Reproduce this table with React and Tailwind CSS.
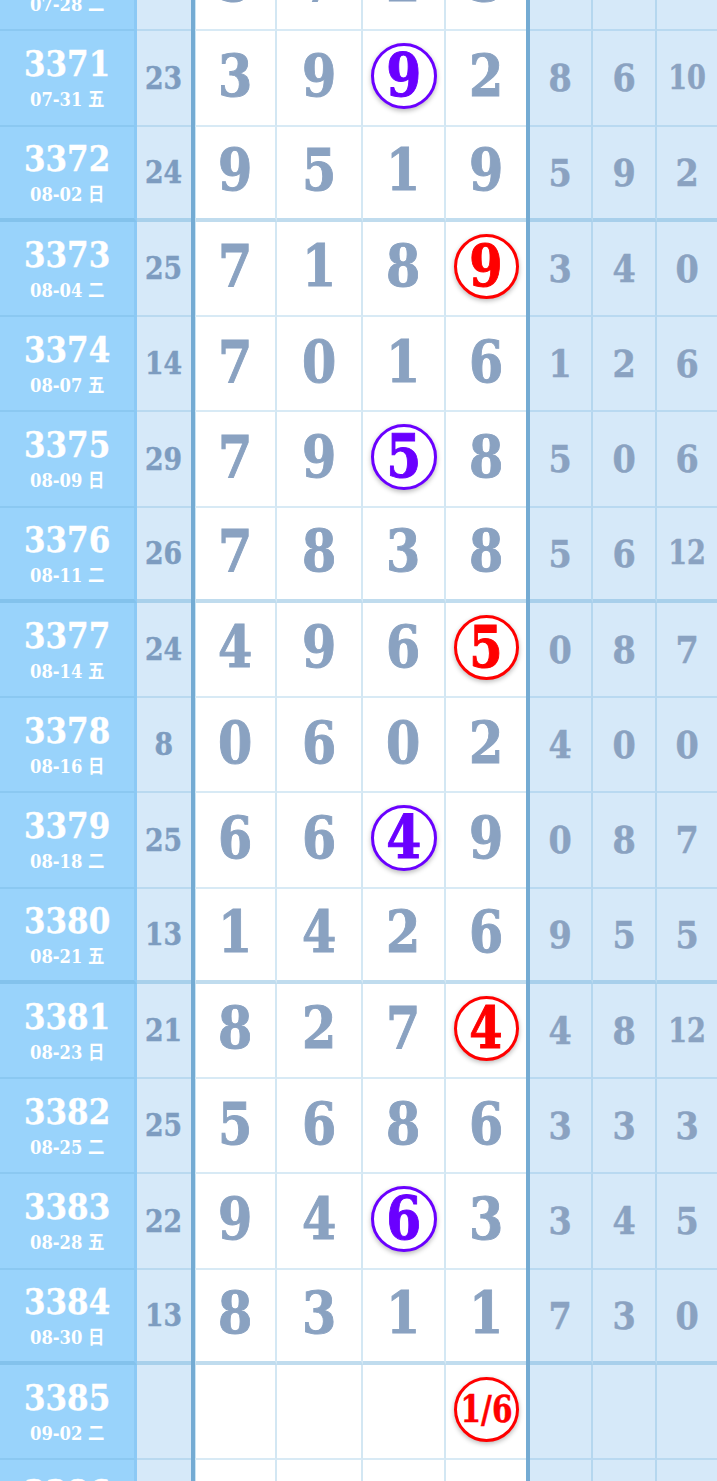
import React from "react";

const rows = [
  { id: "3370", date: "07-28 二", s: "", d: ["5", "7", "2", "3"], r: ["", "", ""] },
  { id: "3371", date: "07-31 五", s: "23", d: ["3", "9", "9", "2"], r: ["8", "6", "10"], c: 2, cc: "p" },
  { id: "3372", date: "08-02 日", s: "24", d: ["9", "5", "1", "9"], r: ["5", "9", "2"], thick: true },
  { id: "3373", date: "08-04 二", s: "25", d: ["7", "1", "8", "9"], r: ["3", "4", "0"], c: 3, cc: "r" },
  { id: "3374", date: "08-07 五", s: "14", d: ["7", "0", "1", "6"], r: ["1", "2", "6"] },
  { id: "3375", date: "08-09 日", s: "29", d: ["7", "9", "5", "8"], r: ["5", "0", "6"], c: 2, cc: "p" },
  { id: "3376", date: "08-11 二", s: "26", d: ["7", "8", "3", "8"], r: ["5", "6", "12"], thick: true },
  { id: "3377", date: "08-14 五", s: "24", d: ["4", "9", "6", "5"], r: ["0", "8", "7"], c: 3, cc: "r" },
  { id: "3378", date: "08-16 日", s: "8", d: ["0", "6", "0", "2"], r: ["4", "0", "0"] },
  { id: "3379", date: "08-18 二", s: "25", d: ["6", "6", "4", "9"], r: ["0", "8", "7"], c: 2, cc: "p" },
  { id: "3380", date: "08-21 五", s: "13", d: ["1", "4", "2", "6"], r: ["9", "5", "5"], thick: true },
  { id: "3381", date: "08-23 日", s: "21", d: ["8", "2", "7", "4"], r: ["4", "8", "12"], c: 3, cc: "r" },
  { id: "3382", date: "08-25 二", s: "25", d: ["5", "6", "8", "6"], r: ["3", "3", "3"] },
  { id: "3383", date: "08-28 五", s: "22", d: ["9", "4", "6", "3"], r: ["3", "4", "5"], c: 2, cc: "p" },
  { id: "3384", date: "08-30 日", s: "13", d: ["8", "3", "1", "1"], r: ["7", "3", "0"], thick: true },
  { id: "3385", date: "09-02 二", s: "", d: ["", "", "", "1/6"], r: ["", "", ""], c: 3, cc: "r" },
  { id: "3386", date: "09-04 日", s: "", d: ["", "", "", ""], r: ["", "", ""] },
];

const font = { fontFamily: '"DejaVu Serif", "Noto Sans CJK SC", serif' };

function Circle({ color, text }) {
  const small = text.length > 1;
  if (color === "p") {
    return (
      <div className="-mt-[4px] w-[66px] h-[66px] rounded-full border-[3px] border-[#6a00ff] bg-white flex items-center justify-center text-[#6a00ff] shadow-[0_2px_5px_rgba(0,0,0,0.28)]">
        <span className="inline-block scale-x-[0.84] text-[60px] leading-none font-bold -mt-[2px] [-webkit-text-stroke:1px_#6a00ff]">{text}</span>
      </div>
    );
  }
  return (
    <div className="-mt-[4px] w-[65px] h-[65px] rounded-full border-[3px] border-[#ff0000] bg-white flex items-center justify-center text-[#ff0000] shadow-[0_2px_5px_rgba(0,0,0,0.28)]">
      {small ? (
        <span className="inline-block scale-x-[0.8] whitespace-nowrap text-[37px] leading-none font-bold [-webkit-text-stroke:0.5px_#ff0000]">{text}</span>
      ) : (
        <span className="inline-block scale-x-[0.84] text-[57px] leading-none font-bold -mt-[2px] [-webkit-text-stroke:1px_#ff0000]">{text}</span>
      )}
    </div>
  );
}

function Row({ row }) {
  const b = row.thick
    ? "border-b-4 border-b-[rgba(100,170,215,0.4)]"
    : "border-b-2 border-b-[rgba(100,170,215,0.25)]";
  const widths = ["w-[82px]", "w-[86px]", "w-[83px]", "w-[80px]"];
  const rw = ["w-[63px]", "w-[64px]", "w-[60px]"];
  return (
    <div className="flex h-[95.25px]">
      <div className={`w-[137px] shrink-0 bg-[#99d3fb] border-r-[3px] border-r-[rgba(60,140,210,0.14)] ${b} pb-[4px] flex flex-col items-center justify-center text-white font-bold`}>
        <div className="inline-block scale-x-[0.86] whitespace-nowrap text-[36px] leading-[47px] [-webkit-text-stroke:0.4px_#ffffff]">{row.id}</div>
        <div className="inline-block scale-x-[0.86] whitespace-nowrap text-[19px] leading-[24px]">{row.date}</div>
      </div>
      <div className={`w-[54px] shrink-0 bg-[#d6e9f9] ${b} flex items-center justify-center text-[#7d9cc0] font-bold text-[31px]`}>
        <span className="inline-block scale-x-[0.86] [-webkit-text-stroke:0.5px_#7d9cc0]">{row.s}</span>
      </div>
      <div className="w-[4px] shrink-0 bg-[#74abd3]" />
      {row.d.map((v, i) => (
        <div
          key={i}
          className={`${widths[i]} shrink-0 bg-white ${b} ${i === 0 ? "border-l border-l-[#cbe5f4]" : ""} ${i < 3 ? "border-r-2 border-r-[rgba(100,170,215,0.28)]" : ""} flex items-center justify-center text-[#8aa2c1] font-bold text-[58px] leading-none`}
        >
          {row.c === i ? (
            <Circle color={row.cc} text={v} />
          ) : (
            <span className="inline-block scale-x-[0.85] -mt-[4px] [-webkit-text-stroke:1px_#8aa2c1]">{v}</span>
          )}
        </div>
      ))}
      <div className="w-[4px] shrink-0 bg-[#74abd3]" />
      {row.r.map((v, i) => (
        <div
          key={i}
          className={`${rw[i]} shrink-0 bg-[#d6e9f9] ${b} ${i < 2 ? "border-r-2 border-r-[rgba(100,170,215,0.28)]" : ""} flex items-center justify-center text-[#8aa2c1] font-bold`}
        >
          {v.length > 1 ? (
            <span className="inline-block scale-x-[0.82] text-[33px] [-webkit-text-stroke:0.5px_#8aa2c1]">{v}</span>
          ) : (
            <span className="inline-block scale-x-[0.88] text-[38px] [-webkit-text-stroke:0.5px_#8aa2c1]">{v}</span>
          )}
        </div>
      ))}
    </div>
  );
}

export default function App() {
  return (
    <div className="w-[717px] h-[1481px] overflow-hidden bg-white" style={font}>
      <div className="-mt-[64px]">
        {rows.map((r) => (
          <Row key={r.id} row={r} />
        ))}
      </div>
    </div>
  );
}
